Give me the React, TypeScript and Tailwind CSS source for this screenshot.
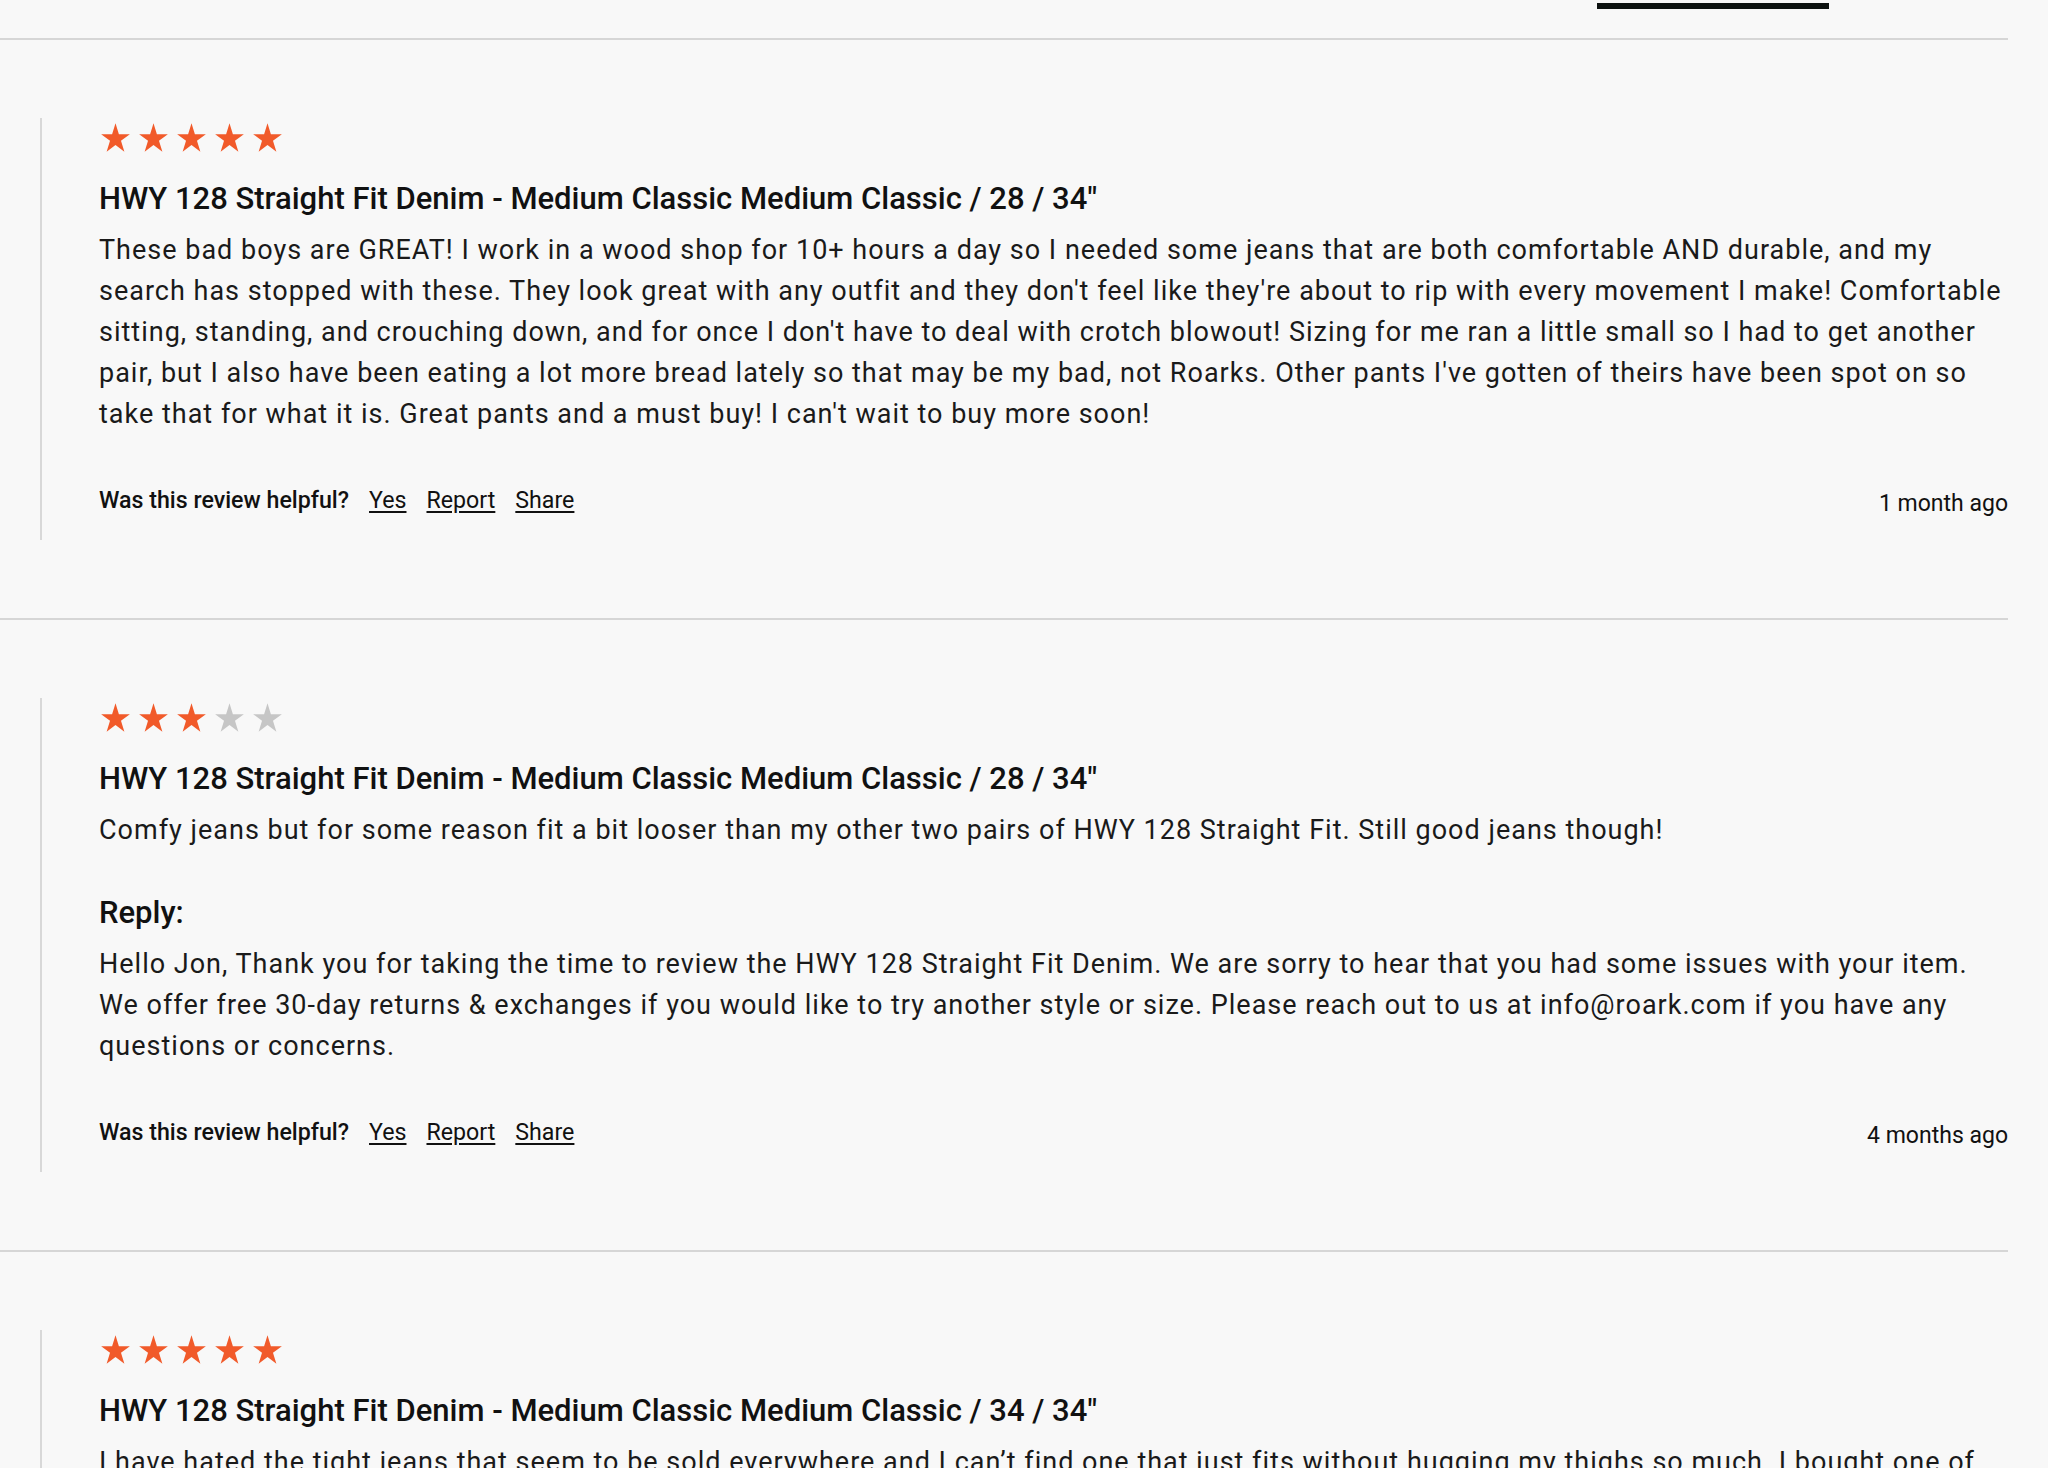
import React from "react";

const STAR_POINTS =
  "50,4.77 61.23,39.32 97.55,39.32 68.16,60.67 79.39,95.22 50,73.87 20.61,95.22 31.84,60.67 2.45,39.32 38.77,39.32";

function Star({ filled }: { filled: boolean }) {
  return (
    <svg
      width="29"
      height="29"
      viewBox="2 4 96 92"
      preserveAspectRatio="none"
      className="block"
    >
      <polygon points={STAR_POINTS} fill={filled ? "#f15a2a" : "#c6c6c6"} />
    </svg>
  );
}

function Stars({ rating }: { rating: number }) {
  return (
    <div className="flex gap-[9px] pt-[5px] h-[34px] pl-[2px]">
      {[1, 2, 3, 4, 5].map((i) => (
        <Star key={i} filled={i <= rating} />
      ))}
    </div>
  );
}

type Review = {
  rating: number;
  title: string;
  body: string[];
  reply?: string[];
  date: string;
};

const reviews: Review[] = [
  {
    rating: 5,
    title: 'HWY 128 Straight Fit Denim - Medium Classic Medium Classic / 28 / 34"',
    body: [
      "These bad boys are GREAT! I work in a wood shop for 10+ hours a day so I needed some jeans that are both comfortable AND durable, and my",
      "search has stopped with these. They look great with any outfit and they don't feel like they're about to rip with every movement I make! Comfortable",
      "sitting, standing, and crouching down, and for once I don't have to deal with crotch blowout! Sizing for me ran a little small so I had to get another",
      "pair, but I also have been eating a lot more bread lately so that may be my bad, not Roarks. Other pants I've gotten of theirs have been spot on so",
      "take that for what it is. Great pants and a must buy! I can't wait to buy more soon!",
    ],
    date: "1 month ago",
  },
  {
    rating: 3,
    title: 'HWY 128 Straight Fit Denim - Medium Classic Medium Classic / 28 / 34"',
    body: [
      "Comfy jeans but for some reason fit a bit looser than my other two pairs of HWY 128 Straight Fit. Still good jeans though!",
    ],
    reply: [
      "Hello Jon, Thank you for taking the time to review the HWY 128 Straight Fit Denim. We are sorry to hear that you had some issues with your item.",
      "We offer free 30-day returns & exchanges if you would like to try another style or size. Please reach out to us at info@roark.com if you have any",
      "questions or concerns.",
    ],
    date: "4 months ago",
  },
  {
    rating: 5,
    title: 'HWY 128 Straight Fit Denim - Medium Classic Medium Classic / 34 / 34"',
    body: [
      "I have hated the tight jeans that seem to be sold everywhere and I can’t find one that just fits without hugging my thighs so much. I bought one of",
      "these and it fit perfectly, so I ordered two more pairs in different washes. They are comfortable all day long and hold up well after many",
      "washes.",
    ],
    date: "5 months ago",
  },
];

function Lines({ lines }: { lines: string[] }) {
  return (
    <p className="mt-[12px] text-[27px] leading-[41px] tracking-[1px] text-[#1a1a1a] whitespace-nowrap">
      {lines.map((l, i) => (
        <span key={i} className="block">
          {l}
        </span>
      ))}
    </p>
  );
}

function ReviewItem({ r }: { r: Review }) {
  return (
    <div className="pt-[78px] pb-[78px]">
      <div className="ml-[40px] border-l-2 border-[#d8d8d8] pl-[57px] pb-[25px]">
        <Stars rating={r.rating} />
        <h3 className="mt-[28px] text-[31px] leading-[38px] font-medium text-[#111111]">
          {r.title}
        </h3>
        <Lines lines={r.body} />
        {r.reply && (
          <>
            <h4 className="mt-[43px] text-[31px] leading-[38px] font-medium text-[#111111]">
              Reply:
            </h4>
            <Lines lines={r.reply} />
          </>
        )}
        <div className="mt-[50px] h-[30px] flex justify-between items-start">
          <div className="flex items-center gap-[20px] text-[23.2px] leading-[30px] text-[#111111]">
            <span className="font-medium">Was this review helpful?</span>
            <a className="underline underline-offset-[3px] cursor-pointer">Yes</a>
            <a className="underline underline-offset-[3px] cursor-pointer">Report</a>
            <a className="underline underline-offset-[3px] cursor-pointer">Share</a>
          </div>
          <span className="mt-[4px] text-[23px] leading-[30px] text-[#111111]">
            {r.date}
          </span>
        </div>
      </div>
    </div>
  );
}

export default function App() {
  return (
    <div
      className="w-[2048px] h-[1468px] overflow-hidden bg-[#f8f8f8]"
      style={{ fontFamily: "Roboto, 'Liberation Sans', sans-serif" }}
    >
      <div className="w-[2008px]">
        <div className="h-[38px] pt-[3px]">
          <div className="ml-[1597px] h-[6px] w-[232px] bg-[#0d1210]" />
        </div>
        <div className="h-[2px] bg-[#d6d6d6]" />
        {reviews.map((r, i) => (
          <div key={i}>
            <ReviewItem r={r} />
            <div className="h-[2px] bg-[#d6d6d6]" />
          </div>
        ))}
      </div>
    </div>
  );
}
